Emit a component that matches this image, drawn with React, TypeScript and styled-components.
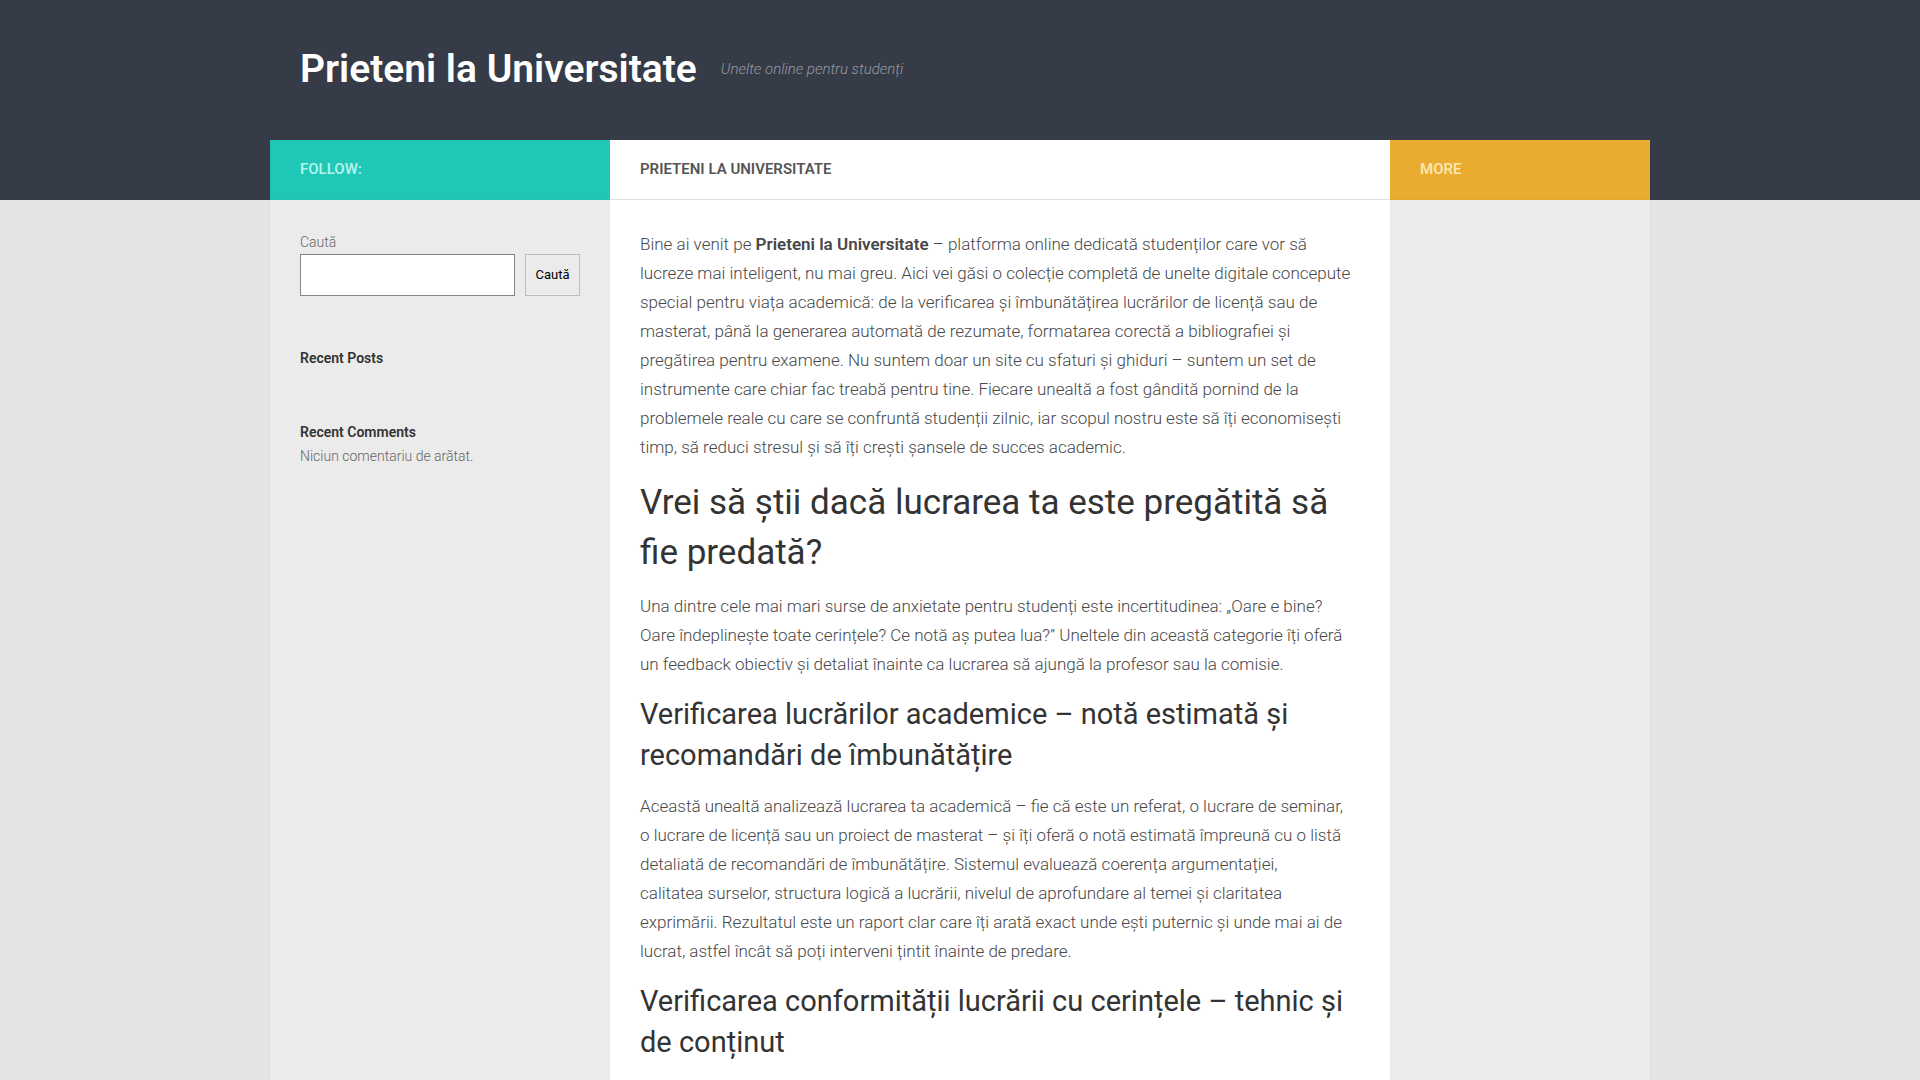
import React from 'react';
import styled, { createGlobalStyle } from 'styled-components';

const GlobalStyle = createGlobalStyle`
  *, *::before, *::after { box-sizing: border-box; }
  body {
    margin: 0;
    background: #e4e4e4;
    color: #666;
    font-family: Roboto, "Liberation Sans", sans-serif;
    font-size: 14px;
    font-weight: 300;
    line-height: 24px;
  }
  h1, h2, h3, p { margin: 0; }
`;

const Page = styled.div`
  display: flex;
  flex-direction: column;
  min-height: 100vh;
`;

const Band = styled.header`
  background: #363b48;
`;

const Container = styled.div`
  width: 100%;
  max-width: 1380px;
  margin: 0 auto;
`;

const Branding = styled(Container)`
  display: flex;
  align-items: center;
  gap: 24px;
  height: 140px;
  padding: 0 30px 2px;
`;

const SiteTitle = styled.h1`
  font-size: 39px;
  font-weight: 600;
  line-height: 60px;
`;

const SiteLink = styled.a`
  color: #fff;
  text-decoration: none;
`;

const Tagline = styled.p`
  color: #979aa2;
  font-size: 15px;
  font-style: italic;
`;

const Columns = styled(Container)`
  display: grid;
  grid-template-columns: 340px minmax(0, 1fr) 260px;
`;

const Strip = styled.div<{ $bg: string; $color: string; $line?: string }>`
  display: flex;
  align-items: center;
  height: 60px;
  padding: 0 30px 2px;
  background: ${(p) => p.$bg};
  border-bottom: 1px solid ${(p) => p.$line ?? p.$bg};
  color: ${(p) => p.$color};
  font-size: 15px;
  font-weight: 600;
  text-transform: uppercase;
`;

const Body = styled(Columns)`
  flex: 1;
  background: #ebebeb;
  box-shadow: 0 0 1px rgba(0, 0, 0, 0.15);
`;

const Sidebar = styled.aside`
  display: flex;
  flex-direction: column;
  gap: 50px;
  padding: 30px;
`;

const SearchForm = styled.form`
  display: flex;
  flex-direction: column;
`;

const SearchRow = styled.div`
  display: flex;
  gap: 10px;
`;

const SearchInput = styled.input`
  flex: 1;
  min-width: 0;
  height: 42px;
  padding: 8px;
  border: 1px solid #858585;
  border-radius: 0;
  background: #fff;
  font: inherit;
`;

const SearchButton = styled.button`
  width: 55px;
  padding: 0;
  border: 1px solid #bcbcbc;
  background: #ebebeb;
  color: #000;
  font: inherit;
  font-size: 13px;
  font-weight: 400;
`;

const WidgetTitle = styled.h2`
  color: #333;
  font-size: 14px;
  font-weight: 600;
  line-height: 24px;
`;

const Article = styled.main`
  padding: 30px 30px 0;
  background: #fff;
  color: #484848;
  font-size: 17px;
  line-height: 29px;
`;

const Heading2 = styled.h2`
  margin: 16px 0 14px;
  color: #333;
  font-size: 35px;
  font-weight: 400;
  line-height: 50px;
`;

const Heading3 = styled.h3`
  margin: 15px 0 16px;
  color: #333;
  font-size: 29px;
  font-weight: 400;
  line-height: 41px;
`;

const Strong = styled.strong`
  font-weight: 600;
`;

export default function App() {
  return (
    <Page>
      <GlobalStyle />
      <Band>
        <Branding>
          <SiteTitle>
            <SiteLink href="#">Prieteni la Universitate</SiteLink>
          </SiteTitle>
          <Tagline>Unelte online pentru studenți</Tagline>
        </Branding>
        <Columns>
          <Strip $bg="#21c7b6" $color="#b0f3ea">Follow:</Strip>
          <Strip $bg="#fff" $color="#555" $line="#e6e6e6">Prieteni la Universitate</Strip>
          <Strip $bg="#e9ac31" $color="#fbe5b0">More</Strip>
        </Columns>
      </Band>
      <Body>
        <Sidebar>
          <SearchForm role="search" onSubmit={(e) => e.preventDefault()}>
            <label htmlFor="search">Caută</label>
            <SearchRow>
              <SearchInput id="search" type="search" />
              <SearchButton type="submit">Caută</SearchButton>
            </SearchRow>
          </SearchForm>
          <WidgetTitle>Recent Posts</WidgetTitle>
          <section>
            <WidgetTitle>Recent Comments</WidgetTitle>
            <p>Niciun comentariu de arătat.</p>
          </section>
        </Sidebar>
        <Article>
          <p>
            Bine ai venit pe <Strong>Prieteni la Universitate</Strong> – platforma online dedicată
            studenților care vor să lucreze mai inteligent, nu mai greu. Aici vei găsi o colecție
            completă de unelte digitale concepute special pentru viața academică: de la verificarea
            și îmbunătățirea lucrărilor de licență sau de masterat, până la generarea automată de
            rezumate, formatarea corectă a bibliografiei și pregătirea pentru examene. Nu suntem
            doar un site cu sfaturi și ghiduri – suntem un set de instrumente care chiar fac treabă
            pentru tine. Fiecare unealtă a fost gândită pornind de la problemele reale cu care se
            confruntă studenții zilnic, iar scopul nostru este să îți economisești timp, să reduci
            stresul și să îți crești șansele de succes academic.
          </p>
          <Heading2>Vrei să știi dacă lucrarea ta este pregătită să fie predată?</Heading2>
          <p>
            Una dintre cele mai mari surse de anxietate pentru studenți este incertitudinea: „Oare e
            bine? Oare îndeplinește toate cerințele? Ce notă aș putea lua?” Uneltele din această
            categorie îți oferă un feedback obiectiv și detaliat înainte ca lucrarea să ajungă la
            profesor sau la comisie.
          </p>
          <Heading3>
            Verificarea lucrărilor academice – notă estimată și recomandări de îmbunătățire
          </Heading3>
          <p>
            Această unealtă analizează lucrarea ta academică – fie că este un referat, o lucrare de
            seminar, o&nbsp;lucrare de licență sau un proiect de masterat – și îți oferă o notă
            estimată împreună cu o listă detaliată de recomandări de îmbunătățire. Sistemul
            evaluează coerența argumentației, calitatea&nbsp;surselor, structura logică a lucrării,
            nivelul de aprofundare al temei și claritatea exprimării.&nbsp;Rezultatul este un raport
            clar care îți arată exact unde ești puternic și unde mai ai de lucrat, astfel încât să
            poți interveni țintit înainte de predare.
          </p>
          <Heading3>
            Verificarea conformității lucrării cu cerințele – tehnic și de conținut
          </Heading3>
        </Article>
      </Body>
    </Page>
  );
}
